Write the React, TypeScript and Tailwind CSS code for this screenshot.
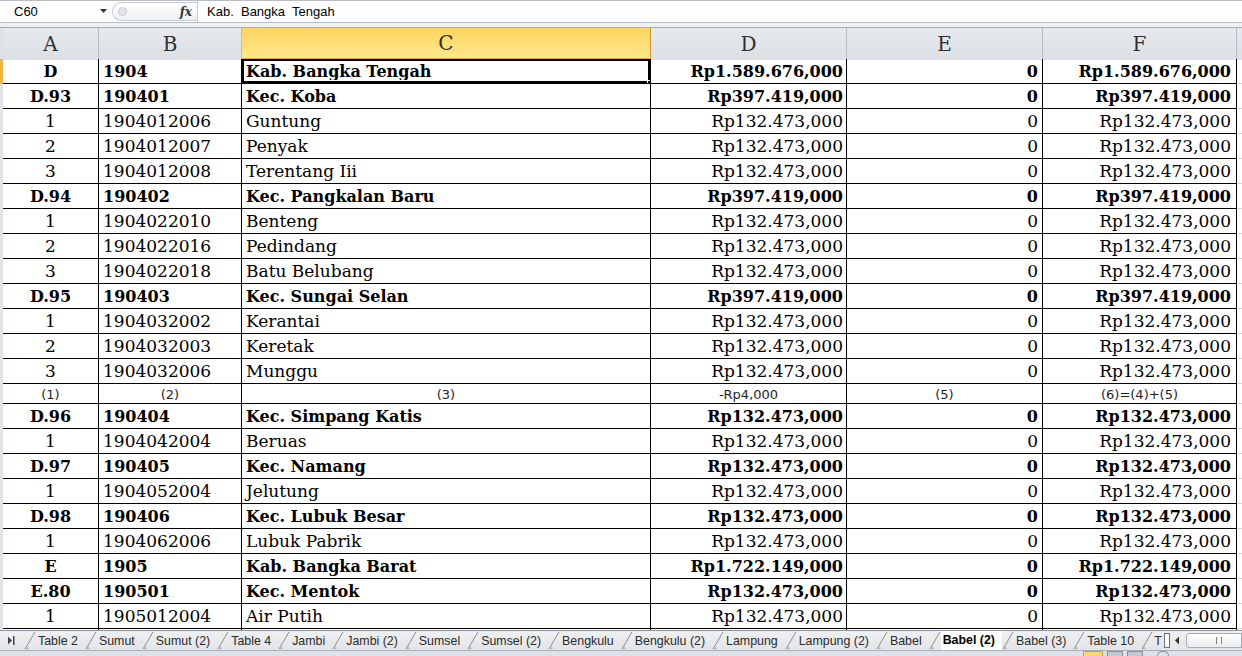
import React from "react"

type Row = {
    a: string
    b: string
    c: string
    d: string
    e: string
    f: string
    bold?: boolean
    small?: boolean
}

const N = "Rp132.473,000"

const rows: Row[] = [
    { a: "D", b: "1904", c: "Kab. Bangka Tengah", d: "Rp1.589.676,000", e: "0", f: "Rp1.589.676,000", bold: true },
    { a: "D.93", b: "190401", c: "Kec. Koba", d: "Rp397.419,000", e: "0", f: "Rp397.419,000", bold: true },
    { a: "1", b: "1904012006", c: "Guntung", d: N, e: "0", f: N },
    { a: "2", b: "1904012007", c: "Penyak", d: N, e: "0", f: N },
    { a: "3", b: "1904012008", c: "Terentang Iii", d: N, e: "0", f: N },
    { a: "D.94", b: "190402", c: "Kec. Pangkalan Baru", d: "Rp397.419,000", e: "0", f: "Rp397.419,000", bold: true },
    { a: "1", b: "1904022010", c: "Benteng", d: N, e: "0", f: N },
    { a: "2", b: "1904022016", c: "Pedindang", d: N, e: "0", f: N },
    { a: "3", b: "1904022018", c: "Batu Belubang", d: N, e: "0", f: N },
    { a: "D.95", b: "190403", c: "Kec. Sungai Selan", d: "Rp397.419,000", e: "0", f: "Rp397.419,000", bold: true },
    { a: "1", b: "1904032002", c: "Kerantai", d: N, e: "0", f: N },
    { a: "2", b: "1904032003", c: "Keretak", d: N, e: "0", f: N },
    { a: "3", b: "1904032006", c: "Munggu", d: N, e: "0", f: N },
    { a: "(1)", b: "(2)", c: "(3)", d: "-Rp4,000", e: "(5)", f: "(6)=(4)+(5)", small: true },
    { a: "D.96", b: "190404", c: "Kec. Simpang Katis", d: N, e: "0", f: N, bold: true },
    { a: "1", b: "1904042004", c: "Beruas", d: N, e: "0", f: N },
    { a: "D.97", b: "190405", c: "Kec. Namang", d: N, e: "0", f: N, bold: true },
    { a: "1", b: "1904052004", c: "Jelutung", d: N, e: "0", f: N },
    { a: "D.98", b: "190406", c: "Kec. Lubuk Besar", d: N, e: "0", f: N, bold: true },
    { a: "1", b: "1904062006", c: "Lubuk Pabrik", d: N, e: "0", f: N },
    { a: "E", b: "1905", c: "Kab. Bangka Barat", d: "Rp1.722.149,000", e: "0", f: "Rp1.722.149,000", bold: true },
    { a: "E.80", b: "190501", c: "Kec. Mentok", d: N, e: "0", f: N, bold: true },
    { a: "1", b: "1905012004", c: "Air Putih", d: N, e: "0", f: N },
]

const tabs = [
    "Table 2", "Sumut", "Sumut (2)", "Table 4", "Jambi", "Jambi (2)", "Sumsel", "Sumsel (2)",
    "Bengkulu", "Bengkulu (2)", "Lampung", "Lampung (2)", "Babel", "Babel (2)", "Babel (3)", "Table 10", "T",
]

const cols = "grid grid-cols-[3px_96px_143px_409px_196px_196px_194px_5px]"
const serif = "font-['DejaVu_Serif',serif]"
const ui = "font-['Liberation_Sans',Arial,sans-serif]"

function FormulaBar() {
    return (
        <div className={`flex h-[23px] border-t border-b border-[#b9bec6] bg-white ${ui}`}>
            <div className="flex w-[112px] items-center justify-between pl-[14px] pr-[4px] text-[13px] text-black">
                <span>C60</span>
                <svg width="8" height="5" viewBox="0 0 8 5">
                    <path d="M0 0 H7 L3.5 4 Z" fill="#333" />
                </svg>
            </div>
            <div className="my-[1px] flex w-[85px] items-center rounded-l-full border border-r-0 border-[#c8ccd2] bg-gradient-to-b from-white to-[#eef0f3]">
                <span className="ml-[5px] h-[9px] w-[9px] rounded-full border border-[#c6c9ce] bg-[#e3e5e8]" />
                <span className="ml-auto mr-[5px] font-['DejaVu_Serif',serif] text-[12px] font-bold italic text-[#333]">fx</span>
            </div>
            <div className="flex flex-1 items-center border-l border-[#c8ccd2] pl-[9px] text-[13px] text-black">
                Kab.&nbsp; Bangka&nbsp; Tengah
            </div>
        </div>
    )
}

function HeaderRow() {
    const h = "flex items-center justify-center border-r border-[#b4bcc7] bg-gradient-to-b from-[#e6e9ed] to-[#dcdfe4]"
    return (
        <div className={`${cols} h-[32px] border-t border-b border-[#a3acb8] ${serif} text-[20px] text-[#303030]`}>
            <div className="bg-[#dfe3e8]" />
            <div className={h}>A</div>
            <div className={h}>B</div>
            <div className="flex items-center justify-center border-r border-[#c9962f] bg-gradient-to-b from-[#fcd45e] to-[#ffe88a] border-b-2 border-b-[#e2a33a]">C</div>
            <div className={h}>D</div>
            <div className={h}>E</div>
            <div className={h}>F</div>
            <div className="bg-gradient-to-b from-[#e6e9ed] to-[#dcdfe4]" />
        </div>
    )
}

function DataRow({ r, i }: { r: Row; i: number }) {
    const c = "flex items-center border-r border-b border-black overflow-hidden whitespace-pre pt-[2px]"
    if (r.small) {
        return (
            <div className={`${cols} h-[20px] font-['DejaVu_Sans',sans-serif] text-[13px] text-[#1e1e1e]`}>
                <div className="bg-[#e1e5ea]" />
                <div className={`${c} justify-center`}>{r.a}</div>
                <div className={`${c} justify-center`}>{r.b}</div>
                <div className={`${c} justify-center`}>{r.c}</div>
                <div className={`${c} justify-center`}>{r.d}</div>
                <div className={`${c} justify-center`}>{r.e}</div>
                <div className={`${c} justify-center`}>{r.f}</div>
                <div className="border-b border-[#d4d4d4]" />
            </div>
        )
    }
    return (
        <div className={`${cols} h-[25px] ${serif} text-black ${r.bold ? "text-[16px] font-bold" : "text-[17px]"}`}>
            <div className={i === 0 ? "bg-[#f2b544]" : "bg-[#e1e5ea]"} />
            <div className={`${c} justify-center`}>{r.a}</div>
            <div className={`${c} pl-[4px]`}>{r.b}</div>
            <div className={`${c} relative pl-[4px]`}>
                {r.c}
                {i === 0 && (
                    <>
                        <span className="absolute inset-[0px] border-2 border-black" />
                        <span className="absolute inset-[2px] border border-white" />
                        <span className="absolute -bottom-[3px] -right-[3px] h-[6px] w-[6px] border border-white bg-black" />
                    </>
                )}
            </div>
            <div className={`${c} justify-end pr-[3px]`}>{r.d}</div>
            <div className={`${c} justify-end pr-[4px]`}>{r.e}</div>
            <div className={`${c} justify-end pr-[5px]`}>{r.f}</div>
            <div className="border-b border-[#d4d4d4]" />
        </div>
    )
}

function Slant() {
    return (
        <svg width="12" height="19" viewBox="0 0 12 19" className="shrink-0">
            <path d="M1 18 L11 1" stroke="#8e8e8e" strokeWidth="1" fill="none" />
            <path d="M1.5 18 L5 18 L3.5 15.5 Z" fill="#b5b5b5" />
        </svg>
    )
}

function TabBar() {
    return (
        <div className={`flex h-[20px] border-t border-[#8d939b] bg-gradient-to-b from-[#eef0f2] to-[#e2e4e7] ${ui} text-[12.4px] text-[#2b2b2b]`}>
            <div className="flex w-[24px] shrink-0 items-center justify-center">
                <svg width="10" height="9" viewBox="0 0 10 9">
                    <path d="M1 0.5 L5 4.5 L1 8.5 Z" fill="#444" />
                    <rect x="6" y="0" width="1.5" height="9" fill="#444" />
                </svg>
            </div>
            <div className="flex w-[1140px] shrink-0 overflow-hidden">
                {tabs.map((t, i) => (
                    <div key={t} className="flex shrink-0 items-stretch">
                        <Slant />
                        <span
                            className={
                                i === 13
                                    ? "-mt-[1px] flex items-center bg-white pl-[2px] pr-[7px] pt-[1px] font-bold text-black"
                                    : i === tabs.length - 1
                                      ? "flex items-center pl-[1px] pt-[1px]"
                                      : "flex items-center pl-[2px] pr-[7px] pt-[1px]"
                            }
                        >
                            {t}
                        </span>
                    </div>
                ))}
            </div>
            <div className="my-[2px] w-[6px] shrink-0 border border-[#6e6e6e] bg-white" />
            <div className="flex w-[14px] shrink-0 items-center justify-center">
                <svg width="6" height="9" viewBox="0 0 6 9">
                    <path d="M5 0.5 L1 4.5 L5 8.5 Z" fill="#333" />
                </svg>
            </div>
            <div className="flex flex-1 items-center py-[2px] pl-[2px]">
                <div className="flex h-full w-full items-center justify-center rounded-l-[3px] border border-[#a7acb3] bg-gradient-to-b from-white to-[#e9ebee]">
                    <span className="ml-[10px] h-[7px] w-[6px] border-x border-[#7d7d7d]" />
                </div>
            </div>
        </div>
    )
}

function StatusStrip() {
    return (
        <div className="flex h-[6px] items-start border-t border-[#a9b0b9] bg-[#dde2e8]">
            <div className="ml-[1083px] h-[5px] w-[20px] rounded-t-[2px] border border-b-0 border-[#d59a2a] bg-[#fcd879]" />
            <div className="ml-[4px] h-[5px] w-[16px] border border-b-0 border-[#8c939c] bg-[#c4cad2]" />
            <div className="ml-[4px] h-[5px] w-[16px] border border-b-0 border-[#8c939c] bg-[#c4cad2]" />
            <div className="ml-[14px] h-[5px] w-[12px] rounded-t-full border border-b-0 border-[#8c939c]" />
        </div>
    )
}

export default function App() {
    return (
        <div className="flex h-[656px] w-[1242px] flex-col overflow-hidden bg-white">
            <FormulaBar />
            <div className="h-[4px] bg-[#eef1f4]" />
            <HeaderRow />
            <div className="flex-1 overflow-hidden">
                {rows.map((r, i) => (
                    <DataRow key={i} r={r} i={i} />
                ))}
                <div className={`${cols} h-[25px]`}>
                    <div className="bg-[#e1e5ea]" />
                    <div className="border-r border-black" />
                    <div className="border-r border-black" />
                    <div className="border-r border-black" />
                    <div className="border-r border-black" />
                    <div className="border-r border-black" />
                    <div className="border-r border-black" />
                    <div />
                </div>
            </div>
            <TabBar />
            <StatusStrip />
        </div>
    )
}
